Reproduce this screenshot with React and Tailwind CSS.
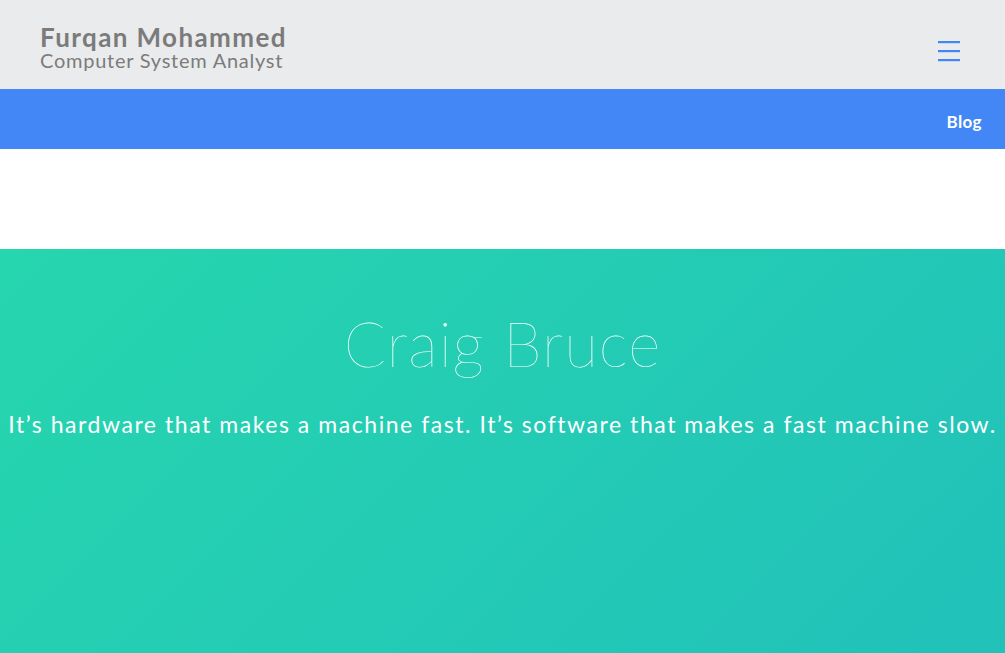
export default function App() {
  return (
    <div className="w-full min-h-[653px] flex flex-col" style={{ fontFamily: "Lato, 'Open Sans', sans-serif" }}>
      <header className="h-[89px] bg-[#eaebed] flex items-center justify-between pl-[40px] pr-[45px]">
        <div className="flex flex-col pt-[5px]">
          <span className="text-[26px] font-bold text-[#7b7b7b] leading-[26px] tracking-[1.4px]">Furqan Mohammed</span>
          <span className="text-[20px] text-[#7b7b7b] leading-[20px] tracking-[0.75px]">Computer System Analyst</span>
        </div>
        <svg width="22" height="22" viewBox="0 0 22 22" className="text-[#4285f4] mt-[12px]">
          <rect x="0" y="1" width="22" height="2.2" fill="currentColor" />
          <rect x="0" y="10" width="22" height="2.2" fill="currentColor" />
          <rect x="0" y="19" width="22" height="2.2" fill="currentColor" />
        </svg>
      </header>
      <nav className="h-[60px] bg-[#4287f5] flex items-center justify-end pr-[23px] pt-[6px]">
        <span className="text-white font-bold text-[17px] tracking-[0.4px]">Blog</span>
      </nav>
      <div className="h-[100px] bg-white" />
      <section className="flex-1 min-h-[404px] bg-[linear-gradient(135deg,#26d6ae,#21c1ba)] flex flex-col items-center pt-[56px] text-white">
        <h1 className="text-[62px] font-thin leading-[76px] tracking-[1px]">Craig Bruce</h1>
        <p className="text-[23px] mt-[26px] whitespace-nowrap tracking-[1.55px]">It’s hardware that makes a machine fast. It’s software that makes a fast machine slow.</p>
      </section>
    </div>
  );
}
